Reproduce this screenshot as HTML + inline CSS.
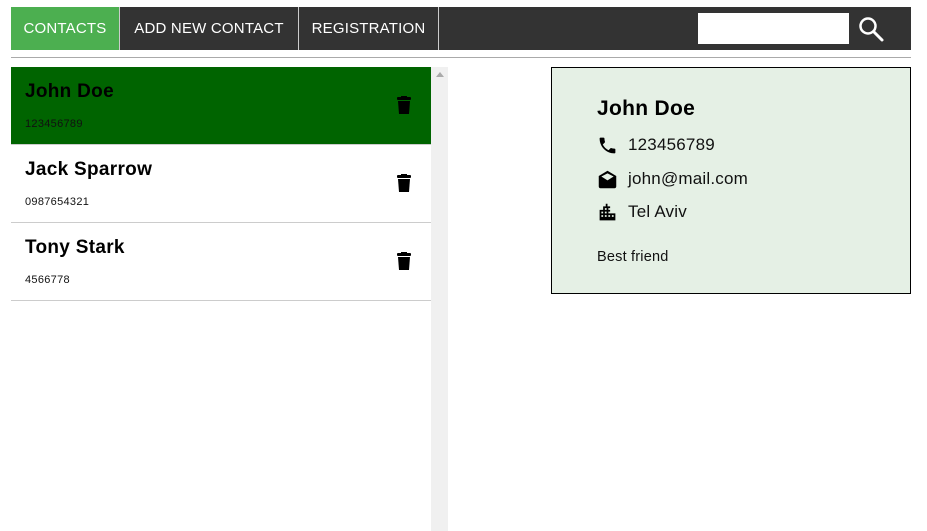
<!DOCTYPE html>
<html><head><style>
*{margin:0;padding:0;box-sizing:border-box}
body{width:927px;height:531px;background:#fff;font-family:"Liberation Sans",sans-serif;position:relative;overflow:hidden}
.nav{position:absolute;left:11px;top:7px;width:900px;height:43px;background:#333}
.tab{position:absolute;top:0;height:43px;color:#fff;font-size:15px;line-height:43px;text-align:center;border-right:1px solid #ccc;letter-spacing:.2px}
.hr{position:absolute;left:11px;top:57px;width:900px;height:1px;background:#aaa}
.list{position:absolute;left:11px;top:67px;width:420px}
.row{height:78px;border-bottom:1px solid #ccc;position:relative}
.row h3{position:absolute;left:14px;top:14px;font-size:19px;font-weight:bold;color:#000;letter-spacing:.3px}
.row p{position:absolute;left:14px;top:51px;font-size:11px;color:#111;letter-spacing:.3px}
.row svg{position:absolute;left:386px;top:29px}
.sb{position:absolute;left:431px;top:67px;width:17px;height:464px;background:#f0f0f0}
.card{position:absolute;left:551px;top:67px;width:360px;height:227px;background:#e5f0e5;border:1px solid #000}
.card h2{position:absolute;left:45px;top:29px;font-size:21px;font-weight:bold;letter-spacing:.3px}
.ln{position:absolute;left:45px;font-size:17px;color:#111;letter-spacing:.2px}
.ln svg{position:absolute;left:0;top:0}
.ln span{position:absolute;left:31px;white-space:nowrap}
</style></head><body>
<div class="nav">
<div class="tab" style="left:0;width:109px;background:#4caf50">CONTACTS</div>
<div class="tab" style="left:109px;width:179px">ADD NEW CONTACT</div>
<div class="tab" style="left:288px;width:140px">REGISTRATION</div>
<div style="position:absolute;left:687px;top:6px;width:151px;height:31px;background:#fff"></div>
<svg style="position:absolute;left:846px;top:8px" width="28" height="28" viewBox="0 0 28 28"><circle cx="11" cy="11" r="7.5" fill="none" stroke="#fff" stroke-width="2.5"/><line x1="16.5" y1="16.5" x2="25" y2="25" stroke="#fff" stroke-width="3" stroke-linecap="round"/></svg>
</div>
<div class="hr"></div>
<div class="list">
<div class="row" style="background:#006400"><h3>John Doe</h3><p>123456789</p><svg width="14" height="18" viewBox="0 0 14 18"><rect x="0" y="1" width="14" height="3" rx="1"/><rect x="4" y="0" width="6" height="2"/><path d="M1 5h12l-1 13H2z"/></svg></div>
<div class="row"><h3>Jack Sparrow</h3><p>0987654321</p><svg width="14" height="18" viewBox="0 0 14 18"><rect x="0" y="1" width="14" height="3" rx="1"/><rect x="4" y="0" width="6" height="2"/><path d="M1 5h12l-1 13H2z"/></svg></div>
<div class="row"><h3>Tony Stark</h3><p>4566778</p><svg width="14" height="18" viewBox="0 0 14 18"><rect x="0" y="1" width="14" height="3" rx="1"/><rect x="4" y="0" width="6" height="2"/><path d="M1 5h12l-1 13H2z"/></svg></div>
</div>
<div class="sb"><div style="margin:5px auto 0;width:0;height:0;border-left:4px solid transparent;border-right:4px solid transparent;border-bottom:5px solid #aaa"></div></div>
<div class="card">
<h2>John Doe</h2>
<div class="ln" style="top:67px"><svg width="21" height="21" viewBox="0 0 24 24"><path d="M6.6 10.8c1.4 2.8 3.8 5.1 6.6 6.6l2.2-2.2c.3-.3.7-.4 1-.2 1.1.4 2.3.6 3.6.6.6 0 1 .4 1 1V20c0 .6-.4 1-1 1C10.6 21 3 13.4 3 4c0-.6.4-1 1-1h3.5c.6 0 1 .4 1 1 0 1.3.2 2.5.6 3.6.1.3 0 .7-.2 1z"/></svg><span>123456789</span></div>
<div class="ln" style="top:101px"><svg width="21" height="21" viewBox="0 0 24 24"><path d="M12 2L2 8v12c0 1 .9 2 2 2h16c1.1 0 2-1 2-2V8zM12 13L5 8.5 12 5l7 3.5z"/></svg><span>john@mail.com</span></div>
<div class="ln" style="top:134px"><svg width="21" height="21" viewBox="0 0 24 24"><path d="M3 21V9h4V5h3V2h2v3h3v8h6v8zM5 11v2h2v-2zm0 4v2h2v-2zm4-8v2h2V7zm0 4v2h2v-2zm0 4v2h2v-2zm4-8v2h2V7zm0 4v2h2v-2zm0 4v2h2v-2zm4 0v2h2v-2z"/></svg><span>Tel Aviv</span></div>
<div class="ln" style="top:181px;font-size:14.5px">Best friend</div>
</div>
</body></html>
